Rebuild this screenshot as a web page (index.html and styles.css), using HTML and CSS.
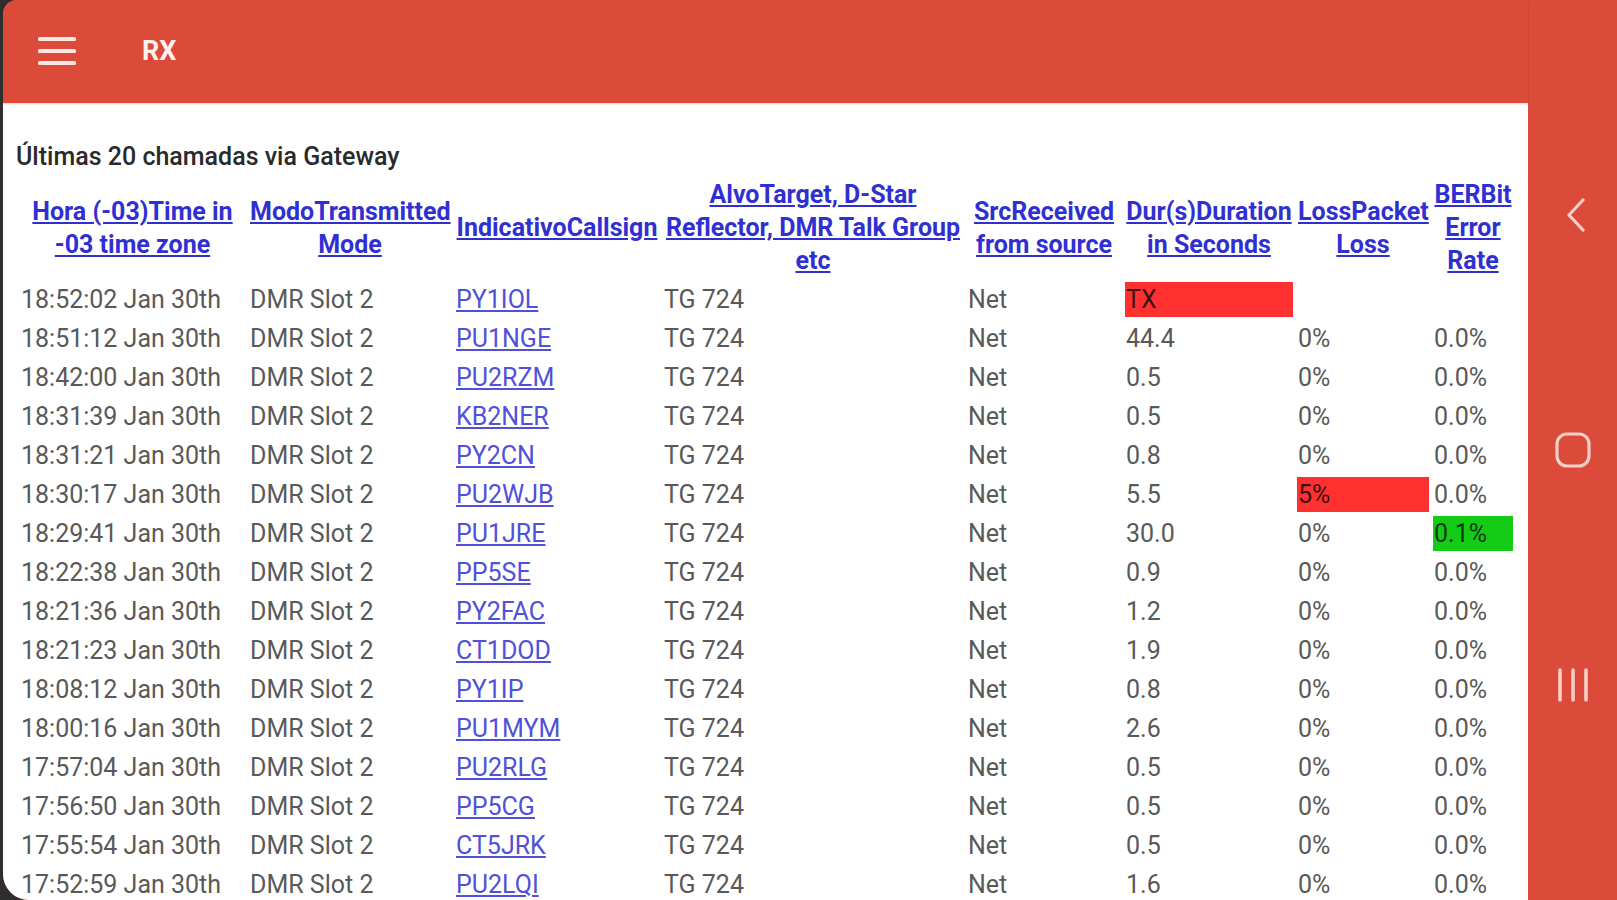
FILE: index.html
```html
<!DOCTYPE html>
<html lang="pt">
<head>
<meta charset="utf-8">
<title>RX</title>
<link rel="stylesheet" href="styles.css">
</head>
<body>
<div class="screen">
  <div class="app">
    <header class="appbar">
      <svg class="menu-icon" width="38" height="30" viewBox="0 0 38 30" aria-hidden="true">
        <rect x="0" y="1" width="38" height="4" rx="1.5"/>
        <rect x="0" y="13" width="38" height="4" rx="1.5"/>
        <rect x="0" y="25" width="38" height="4" rx="1.5"/>
      </svg>
      <span class="appbar-title">RX</span>
    </header>
    <main class="content">
      <h1 class="title">Últimas 20 chamadas via Gateway</h1>
      <table class="calls">
        <thead>
          <tr>
            <th class="c-time"><a href="#">Hora (-03)Time in<br>-03 time zone</a></th>
            <th class="c-mode"><a href="#">ModoTransmitted<br>Mode</a></th>
            <th class="c-call"><a href="#">IndicativoCallsign</a></th>
            <th class="c-target"><a href="#">AlvoTarget, D-Star<br>Reflector, DMR Talk Group<br>etc</a></th>
            <th class="c-src"><a href="#">SrcReceived<br>from source</a></th>
            <th class="c-dur"><a href="#">Dur(s)Duration<br>in Seconds</a></th>
            <th class="c-loss"><a href="#">LossPacket<br>Loss</a></th>
            <th class="c-ber"><a href="#">BERBit<br>Error<br>Rate</a></th>
          </tr>
        </thead>
        <tbody>
          <tr><td>18:52:02 Jan 30th</td><td>DMR Slot 2</td><td><a href="#">PY1IOL</a></td><td>TG 724</td><td>Net</td><td class="bad">TX</td><td></td><td></td></tr>
          <tr><td>18:51:12 Jan 30th</td><td>DMR Slot 2</td><td><a href="#">PU1NGE</a></td><td>TG 724</td><td>Net</td><td>44.4</td><td>0%</td><td>0.0%</td></tr>
          <tr><td>18:42:00 Jan 30th</td><td>DMR Slot 2</td><td><a href="#">PU2RZM</a></td><td>TG 724</td><td>Net</td><td>0.5</td><td>0%</td><td>0.0%</td></tr>
          <tr><td>18:31:39 Jan 30th</td><td>DMR Slot 2</td><td><a href="#">KB2NER</a></td><td>TG 724</td><td>Net</td><td>0.5</td><td>0%</td><td>0.0%</td></tr>
          <tr><td>18:31:21 Jan 30th</td><td>DMR Slot 2</td><td><a href="#">PY2CN</a></td><td>TG 724</td><td>Net</td><td>0.8</td><td>0%</td><td>0.0%</td></tr>
          <tr><td>18:30:17 Jan 30th</td><td>DMR Slot 2</td><td><a href="#">PU2WJB</a></td><td>TG 724</td><td>Net</td><td>5.5</td><td class="bad">5%</td><td>0.0%</td></tr>
          <tr><td>18:29:41 Jan 30th</td><td>DMR Slot 2</td><td><a href="#">PU1JRE</a></td><td>TG 724</td><td>Net</td><td>30.0</td><td>0%</td><td class="good">0.1%</td></tr>
          <tr><td>18:22:38 Jan 30th</td><td>DMR Slot 2</td><td><a href="#">PP5SE</a></td><td>TG 724</td><td>Net</td><td>0.9</td><td>0%</td><td>0.0%</td></tr>
          <tr><td>18:21:36 Jan 30th</td><td>DMR Slot 2</td><td><a href="#">PY2FAC</a></td><td>TG 724</td><td>Net</td><td>1.2</td><td>0%</td><td>0.0%</td></tr>
          <tr><td>18:21:23 Jan 30th</td><td>DMR Slot 2</td><td><a href="#">CT1DOD</a></td><td>TG 724</td><td>Net</td><td>1.9</td><td>0%</td><td>0.0%</td></tr>
          <tr><td>18:08:12 Jan 30th</td><td>DMR Slot 2</td><td><a href="#">PY1IP</a></td><td>TG 724</td><td>Net</td><td>0.8</td><td>0%</td><td>0.0%</td></tr>
          <tr><td>18:00:16 Jan 30th</td><td>DMR Slot 2</td><td><a href="#">PU1MYM</a></td><td>TG 724</td><td>Net</td><td>2.6</td><td>0%</td><td>0.0%</td></tr>
          <tr><td>17:57:04 Jan 30th</td><td>DMR Slot 2</td><td><a href="#">PU2RLG</a></td><td>TG 724</td><td>Net</td><td>0.5</td><td>0%</td><td>0.0%</td></tr>
          <tr><td>17:56:50 Jan 30th</td><td>DMR Slot 2</td><td><a href="#">PP5CG</a></td><td>TG 724</td><td>Net</td><td>0.5</td><td>0%</td><td>0.0%</td></tr>
          <tr><td>17:55:54 Jan 30th</td><td>DMR Slot 2</td><td><a href="#">CT5JRK</a></td><td>TG 724</td><td>Net</td><td>0.5</td><td>0%</td><td>0.0%</td></tr>
          <tr><td>17:52:59 Jan 30th</td><td>DMR Slot 2</td><td><a href="#">PU2LQI</a></td><td>TG 724</td><td>Net</td><td>1.6</td><td>0%</td><td>0.0%</td></tr>
        </tbody>
      </table>
    </main>
  </div>
  <nav class="sysnav">
    <svg class="nav-icon" width="22" height="34" viewBox="0 0 22 34" aria-hidden="true">
      <polyline points="18,2 4,17 18,32" fill="none" stroke-width="3.2" stroke-linecap="round" stroke-linejoin="round"/>
    </svg>
    <svg class="nav-icon" width="36" height="36" viewBox="0 0 36 36" aria-hidden="true">
      <rect x="2" y="2" width="32" height="32" rx="10" fill="none" stroke-width="3.2"/>
    </svg>
    <svg class="nav-icon" width="34" height="34" viewBox="0 0 34 34" aria-hidden="true">
      <line x1="4" y1="2" x2="4" y2="32" stroke-width="3.6" stroke-linecap="round"/>
      <line x1="17" y1="2" x2="17" y2="32" stroke-width="3.6" stroke-linecap="round"/>
      <line x1="30" y1="2" x2="30" y2="32" stroke-width="3.6" stroke-linecap="round"/>
    </svg>
  </nav>
</div>
</body>
</html>
```
FILE: styles.css
```css
html, body {
  margin: 0;
  padding: 0;
  height: 100%;
  background: #2e2e2e;
  overflow: hidden;
}

body {
  font-family: Roboto, "Noto Sans", "Liberation Sans", sans-serif;
}

.screen {
  margin-left: 3px;
  height: 900px;
  display: flex;
  background: #dc4b39;
  border-radius: 14px 0 0 26px;
  overflow: hidden;
}

.app {
  flex: 1;
  display: flex;
  flex-direction: column;
  min-width: 0;
}

.appbar {
  height: 103px;
  flex: none;
  background: #dc4b39;
  display: flex;
  align-items: center;
  padding-left: 35px;
  box-shadow: 0 1px 2px rgba(0, 0, 0, 0.18);
  position: relative;
  z-index: 1;
}

.menu-icon {
  fill: #fbe8e5;
  margin-top: -2px;
}

.appbar-title {
  margin-left: 66px;
  color: #fdf0ee;
  font-size: 27px;
  font-weight: 700;
  margin-top: -2px;
}

.content {
  flex: 1;
  background: #ffffff;
  padding: 37px 0 0 13px;
  overflow: hidden;
}

.title {
  margin: 0;
  font-size: 25px;
  line-height: 33px;
  font-weight: 500;
  color: #2a2a2a;
}

.calls {
  table-layout: fixed;
  width: 1501px;
  border-collapse: separate;
  border-spacing: 4px;
  font-size: 25px;
  line-height: 33px;
  color: #595959;
}

.calls th,
.calls td {
  padding: 1px;
}

.calls th {
  font-weight: 700;
  text-align: center;
  vertical-align: middle;
}

.calls td {
  text-align: left;
  vertical-align: middle;
  white-space: nowrap;
  overflow: hidden;
}

.calls a {
  color: #3030d2;
  text-decoration: underline;
  text-underline-offset: 2px;
}

.calls td a {
  color: #5050da;
}

.c-time { width: 223px; }
.c-mode { width: 200px; }
.c-call { width: 202px; }
.c-target { width: 298px; }
.c-src { width: 152px; }
.c-dur { width: 166px; }
.c-loss { width: 130px; }
.c-ber { width: 78px; }

.calls td.bad {
  background: #fe3030;
  color: #3a1010;
}

.calls td.good {
  background: #14cc16;
  color: #0e3a0e;
}

.sysnav {
  width: 89px;
  flex: none;
  background: #dc4b39;
  display: flex;
  flex-direction: column;
  align-items: center;
  justify-content: space-between;
  padding: 198px 0 198px;
  box-sizing: border-box;
}

.nav-icon {
  stroke: #f6cfc9;
  fill: none;
}

.nav-icon:first-child {
  margin-left: 6px;
}
```
